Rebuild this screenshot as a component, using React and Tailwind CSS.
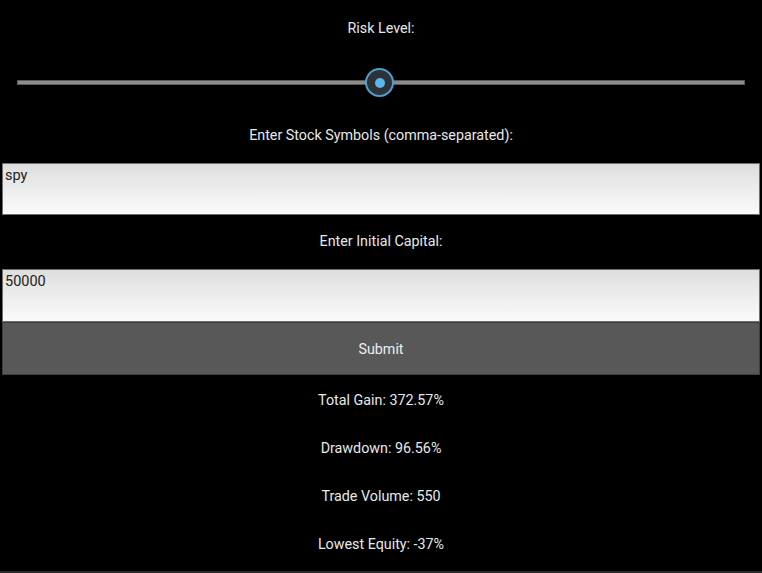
export default function App() {
  const font = { fontFamily: 'Roboto, "Liberation Sans", sans-serif' };
  return (
    <div className="w-[762px] h-[573px] bg-black flex flex-col overflow-hidden relative" style={font}>
      <div className="h-[57px] flex items-center justify-center text-[14.3px] text-[#e8e8e8]">Risk Level:</div>
      <div className="h-[51px] flex items-center px-[17px] relative">
        <div className="w-full h-[5px] bg-[#8c8c8c] border border-[#5a5a5a]" />
        <div className="absolute left-[365px] top-[11px] w-[29px] h-[29px] rounded-full border-2 border-[#4c9fcf] bg-[#2e3236] flex items-center justify-center">
          <div className="w-[10px] h-[10px] rounded-full bg-[#5ab6ea]" />
        </div>
      </div>
      <div className="h-[55px] flex items-center justify-center text-[14.3px] text-[#e8e8e8]">Enter Stock Symbols (comma-separated):</div>
      <div className="h-[52px] mx-[2px] border border-[#6f6f6f] bg-gradient-to-b from-[#dedede] to-[#fbfbfb] px-[2px] pt-[1px] text-[14.5px] text-[#222]">spy</div>
      <div className="h-[54px] flex items-center justify-center text-[14.3px] text-[#e8e8e8]">Enter Initial Capital:</div>
      <div className="h-[53px] mx-[2px] border border-[#6f6f6f] bg-gradient-to-b from-[#dedede] to-[#fbfbfb] px-[2px] pt-[1px] text-[14.5px] text-[#222]">50000</div>
      <div className="h-[53px] mx-[2px] border border-[#3e3e3e] bg-[#585858] flex items-center justify-center pt-[3px] text-[14.3px] text-[#eeeeee]">Submit</div>
      <div className="h-[50px] flex items-center justify-center pt-[2px] text-[14.3px] text-[#e8e8e8]">Total Gain: 372.57%</div>
      <div className="h-[48px] flex items-center justify-center text-[14.3px] text-[#e8e8e8]">Drawdown: 96.56%</div>
      <div className="h-[48px] flex items-center justify-center text-[14.3px] text-[#e8e8e8]">Trade Volume: 550</div>
      <div className="h-[48px] flex items-center justify-center text-[14.3px] text-[#e8e8e8]">Lowest Equity: -37%</div>
      <div className="absolute left-0 right-0 bottom-0 h-[2px] bg-[#2a2a2a]" />
    </div>
  );
}
